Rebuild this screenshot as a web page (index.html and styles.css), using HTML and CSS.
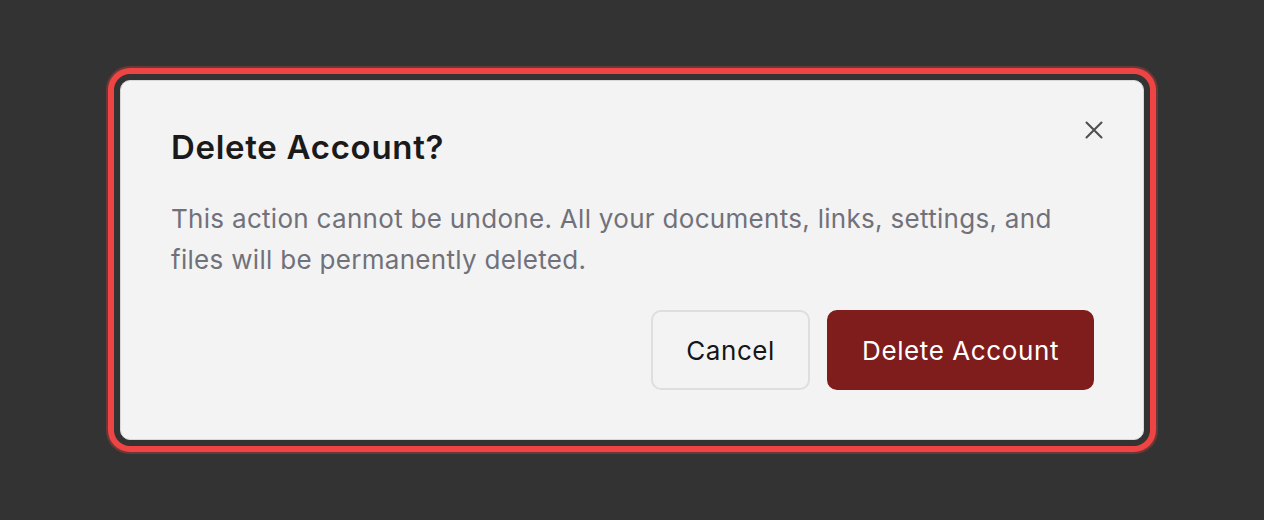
FILE: index.html
```html
<!DOCTYPE html>
<html lang="en">
<head>
<meta charset="utf-8">
<title>Delete Account</title>
<link rel="stylesheet" href="styles.css">
</head>
<body>
<div class="stage">
  <div class="dialog" role="dialog" aria-labelledby="dlg-title">
    <div class="dialog-head">
      <h2 id="dlg-title" class="dialog-title">Delete Account?</h2>
      <button class="close-btn" aria-label="Close">
        <svg viewBox="0 0 24 24" width="24" height="24" fill="none" stroke="currentColor" stroke-width="2.5" stroke-linecap="round"><path d="M3 3L21 21M21 3L3 21"/></svg>
      </button>
    </div>
    <p class="dialog-text">This action cannot be undone. All your documents, links, settings, and files will be permanently deleted.</p>
    <div class="dialog-actions">
      <button class="btn btn-secondary">Cancel</button>
      <button class="btn btn-danger">Delete Account</button>
    </div>
  </div>
</div>
</body>
</html>
```
FILE: styles.css
```css
html, body {
  margin: 0;
  padding: 0;
  background: #333333;
  font-family: Inter, "Noto Sans", sans-serif;
}
.stage {
  width: 1264px;
  height: 520px;
  display: flex;
  align-items: center;
  justify-content: center;
}
.dialog {
  box-sizing: border-box;
  width: 1024px;
  height: 360px;
  background: #f3f3f3;
  border: 1px solid #d8d8d8;
  border-radius: 10px;
  padding: 49px 49px 49px 50px;
  box-shadow: 0 0 0 6px #333333, 0 0 0 12px #ef4444, 0 0 0 14px rgba(239, 68, 68, 0.3);
  display: flex;
  flex-direction: column;
}
.dialog-head {
  display: flex;
  justify-content: space-between;
  align-items: flex-start;
}
.dialog-title {
  margin: -3px 0 0;
  font-size: 33px;
  font-weight: 600;
  line-height: 40px;
  color: #1a1a1a;
  letter-spacing: 0.7px;
}
.close-btn {
  border: 0;
  background: none;
  padding: 0;
  margin: -20px -20px 0 0;
  width: 40px;
  height: 40px;
  display: flex;
  align-items: center;
  justify-content: center;
  color: #4f4f4f;
  cursor: pointer;
}
.close-btn svg {
  width: 20px;
  height: 20px;
}
.dialog-text {
  margin: 31px 0 0;
  font-size: 26px;
  line-height: 41px;
  color: #71717a;
  letter-spacing: 0.3px;
  max-width: 910px;
}
.dialog-actions {
  margin-top: auto;
  display: flex;
  justify-content: flex-end;
  gap: 17px;
}
.btn {
  font-family: inherit;
  font-size: 26px;
  letter-spacing: 0.6px;
  height: 80px;
  padding: 0 33px;
  border-radius: 10px;
  cursor: pointer;
}
.btn-secondary {
  background: #f3f3f3;
  border: 2px solid #dedede;
  color: #161616;
}
.btn-danger {
  background: #7f1d1d;
  border: 2px solid #7f1d1d;
  color: #ffffff;
}
```
